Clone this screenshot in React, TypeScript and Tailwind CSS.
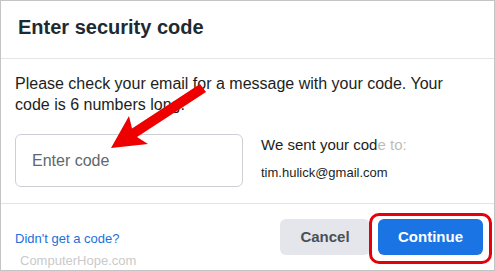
export default function App() {
  return (
    <div className="relative w-[495px] h-[271px] bg-white font-['Liberation_Sans',Arial,sans-serif]">
      <div className="flex h-full w-full flex-col border border-[#c4c4c4]">
        <div className="h-[58px] shrink-0 border-b border-[#e4e4e4] px-[17px] pt-[14px]">
          <h1 className="text-[20px] leading-[24px] font-bold text-[#1c2b33]">Enter security code</h1>
        </div>
        <div className="h-[145px] shrink-0 border-b border-[#e4e4e4] px-[14px] pt-[14px]">
          <p className="text-[16px] leading-[21px] text-[#1c1e21]">
            Please check your email for a message with your code. Your code is 6 numbers long.
          </p>
          <div className="mt-[19px] flex gap-[18px]">
            <div className="flex h-[53px] w-[228px] items-center rounded-md border border-[#ccd0d5] px-4">
              <span className="text-[16px] text-[#606770]">Enter code</span>
            </div>
            <div className="pt-[2px]">
              <div className="text-[15px] leading-[18px] text-[#1c1e21]">
                We sent your cod<span className="opacity-30">e to:</span>
              </div>
              <div className="mt-[11px] text-[13px] leading-[16px] text-[#1c1e21]">tim.hulick@gmail.com</div>
            </div>
          </div>
        </div>
        <div className="flex flex-1 items-center justify-between pl-[14px] pr-[11px]">
          <a className="pt-[3px] text-[13px] leading-[15px] text-[#216fdb]">Didn't get a code?</a>
          <div className="flex gap-2">
            <button className="h-9 w-[90px] rounded-md bg-[#e4e6eb] text-[15px] font-bold text-[#4b4f56]">Cancel</button>
            <button className="h-9 w-[105px] rounded-md bg-[#1b74e4] text-[15px] font-bold text-white">Continue</button>
          </div>
        </div>
      </div>

      {/* annotations */}
      <div className="pointer-events-none absolute left-[20px] top-[254px] text-[13px] leading-[13px] text-[#cacaca]">
        ComputerHope.com
      </div>
      <div className="pointer-events-none absolute left-[369px] top-[213px] h-[51px] w-[123px] rounded-[10px] border-[3px] border-[#e5000b]" />
      <svg className="pointer-events-none absolute left-0 top-0" width="495" height="271" viewBox="0 0 495 271">
        <polygon
          points="111,148 129,116 132,128.5 200,84 206,92 137,137 148,144"
          fill="#ee0000"
        />
      </svg>
    </div>
  )
}
